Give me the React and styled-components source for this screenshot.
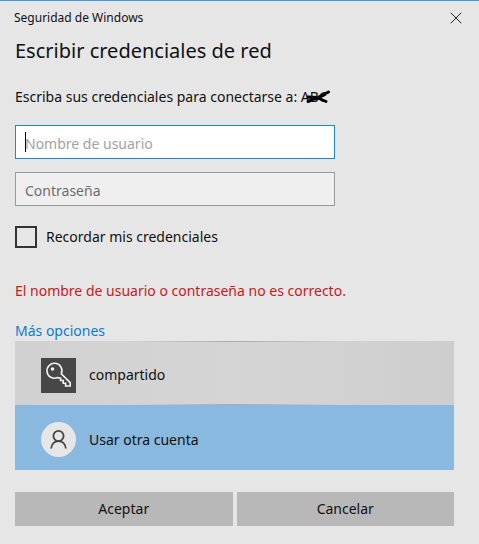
import React from 'react'
import styled, { createGlobalStyle } from 'styled-components'

const GlobalStyle = createGlobalStyle`
  * {
    box-sizing: border-box;
  }

  body {
    margin: 0;
    background: #e6e6e6;
    color: #111111;
    font: 14px/20px 'Noto Sans', 'Open Sans', sans-serif;
  }

  button,
  input {
    font: inherit;
    color: inherit;
  }
`

const Dialog = styled.main`
  border-top: 1px solid #4696dc;
`

const TitleBar = styled.header`
  display: flex;
  justify-content: space-between;
  align-items: center;
  height: 34px;
  padding: 0 14px;
  font-size: 12px;
`

const CloseButton = styled.button`
  display: flex;
  padding: 3px;
  border: 0;
  background: none;
`

const Content = styled.form`
  display: flex;
  flex-direction: column;
  align-items: flex-start;
  padding: 0 25px 18px 15px;
`

const Heading = styled.h1`
  margin: 2px 0 0;
  font-size: 20px;
  font-weight: 400;
  line-height: 28px;
`

const Message = styled.p`
  margin: 22px 0 18px;
`

const Server = styled.span`
  position: relative;
  display: inline-block;

  svg {
    position: absolute;
    left: 4px;
    top: 2px;
  }
`

const Field = styled.div`
  position: relative;
  width: 320px;
  max-width: 100%;
  margin-bottom: 13px;
`

const TextInput = styled.input`
  display: block;
  width: 100%;
  height: 34px;
  padding: 2px 9px 0;
  border: 1px solid ${({ $active }) => ($active ? '#1c86dc' : '#999999')};
  border-radius: 0;
  outline: 0;
  background: ${({ $active }) => ($active ? '#ffffff' : '#efefef')};

  &::placeholder {
    color: ${({ $active }) => ($active ? '#a2a2a2' : '#6e6e6e')};
    opacity: 1;
  }
`

const Caret = styled.span`
  position: absolute;
  left: 10px;
  top: 7px;
  width: 1px;
  height: 20px;
  background: #000000;
`

const Remember = styled.label`
  display: flex;
  align-items: center;
  gap: 9px;
  margin-top: 7px;

  input {
    appearance: none;
    width: 22px;
    height: 22px;
    margin: 0;
    border: 2px solid #333333;
  }
`

const ErrorText = styled.p`
  margin: 33px 0 20px;
  color: #c8181e;
`

const MoreLink = styled.a`
  color: #0f7ad4;
  text-decoration: none;
`

const Accounts = styled.div`
  align-self: stretch;
`

const Account = styled.button`
  display: flex;
  align-items: center;
  gap: 13px;
  width: 100%;
  height: ${({ $selected }) => ($selected ? '65px' : '64px')};
  padding: 4px 26px 0;
  border: 0;
  background: ${({ $selected }) =>
    $selected
      ? '#8ab9e0'
      : `linear-gradient(to right, transparent 25%, #aaaaaa 50%, transparent 75%) top / 100% 1px no-repeat,
         linear-gradient(to right, transparent 25%, #aaaaaa 50%, transparent 75%) bottom / 100% 1px no-repeat,
         linear-gradient(to right, #d1d1d1, #d5d5d5 50%, #cecece)`};
  text-align: left;

  svg {
    flex: none;
  }
`

const Actions = styled.div`
  align-self: stretch;
  display: grid;
  grid-template-columns: 1fr 1fr;
  gap: 4px;
  margin-top: 22px;
`

const ActionButton = styled.button`
  height: 34px;
  padding: 0;
  border: 0;
  background: #b8b8b8;
`

const CloseIcon = () => (
  <svg width="12" height="12" viewBox="0 0 12 12" stroke="#222222" aria-hidden="true">
    <path d="M.7.7l10.6 10.6M11.3.7L.7 11.3" />
  </svg>
)

const Scribble = () => (
  <svg
    width="26"
    height="15"
    viewBox="0 0 26 15"
    fill="none"
    stroke="#000000"
    strokeWidth="3"
    strokeLinecap="round"
    strokeLinejoin="round"
    aria-hidden="true"
  >
    <path d="M3 12.5L12 9 23.5 3M3 8l9 .5 9 4M6 10.500l6-1 8-4" />
  </svg>
)

const KeyIcon = () => (
  <svg width="35" height="35" viewBox="0 0 35 35" fill="none" aria-hidden="true">
    <path fill="#474747" d="M0 0h35v35H0z" />
    <path
      stroke="#f2f2f2"
      strokeWidth="1.6"
      d="M16.5 19.6A7.5 7.5 0 1 1 20.3 15.8L29.2 24.6V28H24.6V25.2H22.2V22.5H19.6V20.2Z"
    />
    <circle cx="11.5" cy="11" r="1.8" fill="#f2f2f2" />
  </svg>
)

const UserIcon = () => (
  <svg width="35" height="35" viewBox="0 0 35 35" fill="none" aria-hidden="true">
    <circle cx="17.5" cy="17.5" r="17.5" fill="#e6e6e6" />
    <g stroke="#444444" strokeWidth="1.8">
      <circle cx="17.5" cy="14" r="5.1" />
      <path d="M10.2 26.5c.4-4.4 3.2-7.4 7.3-7.4s6.9 3 7.3 7.4" />
    </g>
  </svg>
)

const App = () => (
  <>
    <GlobalStyle />
    <Dialog>
      <TitleBar>
        <span>Seguridad de Windows</span>
        <CloseButton type="button" aria-label="Cerrar">
          <CloseIcon />
        </CloseButton>
      </TitleBar>
      <Content>
        <Heading>Escribir credenciales de red</Heading>
        <Message>
          Escriba sus credenciales para conectarse a:{' '}
          <Server>
            ABC
            <Scribble />
          </Server>
        </Message>
        <Field>
          <TextInput
            $active
            type="text"
            placeholder="Nombre de usuario"
            aria-label="Nombre de usuario"
          />
          <Caret />
        </Field>
        <Field>
          <TextInput type="password" placeholder="Contraseña" aria-label="Contraseña" />
        </Field>
        <Remember>
          <input type="checkbox" />
          Recordar mis credenciales
        </Remember>
        <ErrorText>El nombre de usuario o contraseña no es correcto.</ErrorText>
        <MoreLink href="#opciones">Más opciones</MoreLink>
        <Accounts>
          <Account type="button">
            <KeyIcon />
            compartido
          </Account>
          <Account type="button" $selected>
            <UserIcon />
            Usar otra cuenta
          </Account>
        </Accounts>
        <Actions>
          <ActionButton type="submit">Aceptar</ActionButton>
          <ActionButton type="button">Cancelar</ActionButton>
        </Actions>
      </Content>
    </Dialog>
  </>
)

export default App
